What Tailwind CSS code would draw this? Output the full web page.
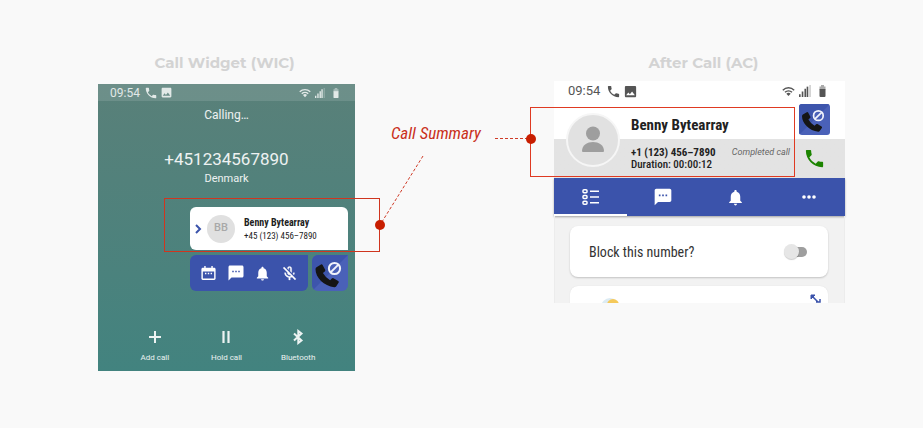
<!DOCTYPE html>
<html lang="en">
<head>
<meta charset="utf-8">
<meta name="viewport" content="width=device-width, initial-scale=1">
<title>Call Summary</title>
<script src="https://cdn.jsdelivr.net/npm/@tailwindcss/browser@4"></script>
</head>
<body class="min-h-screen bg-[#f9f9f9] font-['Roboto',sans-serif]">
<svg class="hidden" aria-hidden="true">
  <symbol id="phone" viewBox="0 0 24 24"><path d="M6.62 10.79c1.44 2.83 3.76 5.14 6.59 6.59l2.2-2.2c.27-.27.67-.36 1.02-.24 1.12.37 2.33.57 3.57.57.55 0 1 .45 1 1V20c0 .55-.45 1-1 1-9.39 0-17-7.61-17-17 0-.55.45-1 1-1h3.5c.55 0 1 .45 1 1 0 1.25.2 2.45.57 3.57.11.35.03.74-.25 1.02l-2.2 2.2z"/></symbol>
  <symbol id="image" viewBox="0 0 24 24"><path d="M21 19V5c0-1.1-.9-2-2-2H5c-1.1 0-2 .9-2 2v14c0 1.1.9 2 2 2h14c1.1 0 2-.9 2-2zM8.500 13.500l2.500 3.010L14.500 12l4.500 6H5l3.500-4.500z"/></symbol>
  <symbol id="wifi" viewBox="0 0 24 20"><path d="M1.500 7.500a15 15 0 0 1 21 0M5.500 11.500a9.500 9.500 0 0 1 13 0" fill="none" stroke="currentColor" stroke-width="2.600"/><path d="M12 18.500l-4-4.500a6 6 0 0 1 8 0z"/></symbol>
  <symbol id="signal" viewBox="0 0 22 22"><path d="M0 17h3v5H0zM5 12h3v10H5zM10 7h3v15h-3z"/><path d="M14 3h3v19h-3z"/><path d="M19 0h2.500v22H19z" opacity=".35"/></symbol>
  <symbol id="battery" viewBox="0 0 14 24"><path d="M4 0h6v3h3v6H1V3h3z" opacity=".5"/><path d="M1 8h12v14q0 2-2 2H3q-2 0-2-2z"/></symbol>
  <symbol id="sms" viewBox="0 0 24 24"><path d="M20 2H4c-1.100 0-1.990.9-1.990 2L2 22l4-4h14c1.100 0 2-.9 2-2V4c0-1.100-.9-2-2-2zM9 11H7V9h2v2zm4 0h-2V9h2v2zm4 0h-2V9h2v2z"/></symbol>
  <symbol id="bell" viewBox="0 0 24 24"><path d="M12 22c1.100 0 2-.9 2-2h-4c0 1.100.89 2 2 2zm6-6v-5c0-3.070-1.640-5.640-4.500-6.320V4c0-.83-.67-1.500-1.500-1.500s-1.500.67-1.500 1.500v.68C7.630 5.360 6 7.920 6 11v5l-2 2v1h16v-1l-2-2z"/></symbol>
  <symbol id="blocked" viewBox="0 0 36 36"><path d="M0 0H36L0 36z" fill="#3d55ac"/><path d="M4.500 12.300L9 9.500q1-.5 1.600.5l2.600 4.700q.4 1-.4 1.700l-1.900 1.500q2.800 4.800 7.200 7.300l1.700-1.700q.8-.7 1.700-.2l4.700 2.700q1 .7.5 1.600l-2.600 3.800q-.6.9-1.800.8C12 31 3.500 22.500 3.500 14.200q0-1.300 1-1.900z" fill="#151515"/><circle cx="22.500" cy="13.500" r="5.600" fill="#4a61b8" stroke="#f1f3fb" stroke-width="2"/><path d="M18.600 17.400l7.800-7.800" stroke="#f1f3fb" stroke-width="2"/></symbol>
</svg>

<main class="grid grid-cols-[257fr_199px_291fr] items-start pt-[52px] pl-[98px] pr-[78px]">
  <section>
    <h2 class="h-[22px] pr-1 text-center font-['Montserrat','Inter',sans-serif] text-[15px] leading-[22px] font-bold text-[#d3d3d3] whitespace-nowrap">Call Widget (WIC)</h2>
    <div class="mt-[10px] flex flex-col bg-linear-to-b from-[#598079] to-[#42837f] text-white/90">
      <div class="flex h-[17px] items-center bg-white/12 pl-3 pr-4 text-xs text-white/80">
        <span>09:54</span>
        <svg class="ml-1 size-[14px] fill-current"><use href="#phone"/></svg>
        <svg class="ml-[2px] size-[13px] fill-current"><use href="#image"/></svg>
        <svg class="ml-auto h-[10px] w-3 fill-current"><use href="#wifi"/></svg>
        <svg class="ml-1 size-[10px] fill-current"><use href="#signal"/></svg>
        <svg class="ml-2 h-[10px] w-[6px] fill-current"><use href="#battery"/></svg>
      </div>
      <p class="mt-[6px] text-center text-xs leading-4">Calling…</p>
      <p class="mt-[26px] text-center text-[17px] leading-5">+451234567890</p>
      <p class="mt-[2px] text-center text-[11px] leading-4">Denmark</p>

      <div class="relative mt-[20px] pl-[92px] pr-[7px]">
        <article class="flex h-[43px] items-center rounded-md rounded-br-none bg-white pl-[5px] text-[#222]">
          <button aria-label="Expand" class="w-2"><svg class="h-[10px] w-[7px]" viewBox="0 0 7 10" fill="none" stroke="#3b53ab" stroke-width="2"><path d="M1 1l4 4-4 4"/></svg></button>
          <div class="ml-1 flex size-7 items-center justify-center rounded-full bg-[#e0e0e0] text-[11px] font-medium text-[#a8a8a8]">BB</div>
          <div class="ml-[9px] whitespace-nowrap">
            <h3 class="font-['Roboto_Condensed','Liberation_Sans_Narrow','Roboto'] text-[10px] leading-[14px] font-bold">Benny Bytearray</h3>
            <p class="font-['Roboto_Condensed','Liberation_Sans_Narrow','Roboto'] text-[9px] leading-3">+45 (123) 456–7890</p>
          </div>
        </article>
        <div class="pointer-events-none absolute -top-[9px] -bottom-[2px] left-[66px] -right-[25px] border border-[#d0351f]"></div>
      </div>

      <div class="mt-[5px] flex gap-1 pl-[92px] pr-[7px]">
        <div class="flex h-9 flex-1 items-center justify-between rounded-md rounded-tr-none bg-[#3b53ab] px-[10px] text-white">
          <button aria-label="Calendar"><svg class="block size-[17px]" viewBox="0 0 24 24" fill="currentColor"><path d="M9 11H7v2h2v-2zm4 0h-2v2h2v-2zm4 0h-2v2h2v-2zm3-7h-2V1.500h-2V4H8V1.500H6V4H4c-1.110 0-2 .9-2 2v13c0 1.100.89 2 2 2h16c1.100 0 2-.9 2-2V6c0-1.100-.9-2-2-2zm0 15H4V9h16v10z"/></svg></button>
          <button aria-label="Message"><svg class="block size-[18px] fill-current"><use href="#sms"/></svg></button>
          <button aria-label="Reminder"><svg class="block size-[17px] fill-current"><use href="#bell"/></svg></button>
          <button aria-label="Mute"><svg class="block size-[17px]" viewBox="0 0 24 24" fill="currentColor" stroke="currentColor" stroke-width=".5"><path d="M10.800 4.900c0-.66.54-1.200 1.200-1.200s1.200.54 1.200 1.200l-.01 3.910L15 10.600V5c0-1.660-1.340-3-3-3-1.540 0-2.790 1.160-2.960 2.650l1.760 1.760V4.900zM19 11h-1.700c0 .58-.1 1.130-.27 1.640l1.270 1.270c.44-.88.7-1.870.7-2.910zM4.410 2.860L3 4.270l6 6V11c0 1.660 1.340 3 3 3 .23 0 .44-.03.65-.08l1.660 1.660c-.71.33-1.500.52-2.310.52-2.760 0-5.300-2.100-5.300-5.100H5c0 3.410 2.720 6.230 6 6.720V21h2v-3.280c.91-.13 1.770-.45 2.550-.9l4.200 4.200 1.410-1.410L4.410 2.860z"/></svg></button>
        </div>
        <button aria-label="Block caller" class="size-9 overflow-hidden rounded-md rounded-tr-none bg-[#4a61b8]"><svg class="block size-full"><use href="#blocked"/></svg></button>
      </div>

      <div class="mt-[38px] grid grid-cols-3 px-[21px] pb-[7px] text-[8px] leading-3">
        <button class="flex flex-col items-center gap-[7px]"><svg class="size-4" viewBox="0 0 16 16" stroke="currentColor" stroke-width="2"><path d="M8 2v12M2 8h12"/></svg>Add call</button>
        <button class="flex flex-col items-center gap-[7px]"><svg class="size-4" viewBox="0 0 16 16" stroke="currentColor" stroke-width="2.200"><path d="M5.500 2v12M10.500 2v12"/></svg>Hold call</button>
        <button class="flex flex-col items-center gap-[7px]"><svg class="size-4" viewBox="0 0 16 16" fill="none" stroke="currentColor" stroke-width="2"><path d="M4 4.500l7.500 7L8.300 14V2l3.200 2.500-7.500 7"/></svg>Bluetooth</button>
      </div>
    </div>
  </section>

  <div class="relative z-10 pt-[71px] pl-9">
    <p class="font-['Roboto_Condensed','Liberation_Sans_Narrow','Roboto'] text-[17px] leading-5 whitespace-nowrap text-[#c9301b] italic">Call Summary</p>
    <svg class="pointer-events-none absolute top-0 left-0 h-[190px] w-[199px]" viewBox="0 0 199 190" stroke="#cf3b27" stroke-dasharray="3 2">
      <path d="M140 86.500H175M68 104L25 173"/>
      <g fill="#c81e00" stroke="none"><circle cx="176" cy="87" r="5"/><circle cx="25" cy="173" r="5"/></g>
    </svg>
  </div>

  <section>
    <h2 class="h-[22px] pl-2 text-center font-['Montserrat','Inter',sans-serif] text-[15px] leading-[22px] font-bold text-[#d3d3d3] whitespace-nowrap">After Call (AC)</h2>
    <div class="mt-[7px] bg-[#f2f2f2] text-[#222]">
      <div class="flex h-5 items-center bg-white pl-[14px] pr-[19px] text-[13px] text-[#555]">
        <span>09:54</span>
        <svg class="ml-[6px] size-[15px] fill-current"><use href="#phone"/></svg>
        <svg class="ml-[2px] size-[15px] fill-current"><use href="#image"/></svg>
        <svg class="ml-auto h-[11px] w-[13px] fill-current"><use href="#wifi"/></svg>
        <svg class="ml-1 size-3 fill-current"><use href="#signal"/></svg>
        <svg class="ml-2 h-3 w-[7px] fill-current"><use href="#battery"/></svg>
      </div>
      <header class="relative flex h-[77px] bg-linear-to-b from-white from-[38px] to-[#e3e3e3] to-[38px]">
        <div class="mt-3 ml-3 size-[54px] shrink-0 rounded-full border-2 border-[#f6f6f6] bg-[#e1e1e1]">
          <svg class="size-full" viewBox="0 0 50 50" fill="#9e9e9e"><circle cx="25" cy="18.500" r="7"/><path d="M14 36c0-12 22-12 22 0q0 1-1 1H15q-1 0-1-1z"/></svg>
        </div>
        <div class="ml-[11px] flex-1 whitespace-nowrap">
          <h3 class="mt-[14px] font-['Roboto_Condensed','Liberation_Sans_Narrow','Roboto'] text-[15px] leading-5 font-bold">Benny Bytearray</h3>
          <div class="mt-[11px] flex justify-between text-[11px] leading-[13px]">
            <strong class="font-['Roboto_Condensed','Liberation_Sans_Narrow','Roboto'] font-bold">+1 (123) 456–7890</strong>
            <em class="text-[9px] text-[#666]">Completed call</em>
          </div>
          <p class="font-['Roboto_Condensed','Liberation_Sans_Narrow','Roboto'] text-[11px] leading-3 font-medium">Duration: 00:00:12</p>
        </div>
        <div class="flex w-[55px] flex-col items-center pt-[3px] pr-[6px]">
          <button aria-label="Block caller" class="size-[31px] overflow-hidden rounded-[3px] bg-[#4a61b8]"><svg class="block size-full"><use href="#blocked"/></svg></button>
          <button aria-label="Call back" class="mt-3"><svg class="block size-[23px] fill-[#1c8400]"><use href="#phone"/></svg></button>
        </div>
        <div class="pointer-events-none absolute top-[6px] bottom-[1px] -left-6 right-[50px] border border-[#df3a22]"></div>
      </header>
      <nav class="grid h-[38px] grid-cols-4 bg-[#3b53ab] text-white shadow-[0_1px_2px_#0005]">
        <button aria-label="Summary" class="flex items-center justify-center border-b-2 border-white pt-[2px]"><svg class="h-4 w-[17px]" viewBox="0 0 17 16" fill="none" stroke="currentColor" stroke-width="1.500"><rect x="1" y=".8" width="4" height="3" rx="1"/><rect x="1" y="6.500" width="4" height="3" rx="1"/><rect x="1" y="12.200" width="4" height="3" rx="1"/><path d="M8 2.300h9M8 8h9M8 13.700h9"/></svg></button>
        <button aria-label="Message" class="flex items-center justify-center"><svg class="size-5 fill-current"><use href="#sms"/></svg></button>
        <button aria-label="Reminder" class="flex items-center justify-center"><svg class="size-[19px] fill-current"><use href="#bell"/></svg></button>
        <button aria-label="More" class="flex items-center justify-center"><svg class="h-4 w-[14px]" viewBox="0 0 14 16" fill="currentColor"><circle cx="2" cy="8" r="1.800"/><circle cx="7" cy="8" r="1.800"/><circle cx="12" cy="8" r="1.800"/></svg></button>
      </nav>
      <div class="overflow-hidden border-x border-[#ececec] pt-[10px] pr-4 pl-[15px]">
        <label class="flex h-[51px] items-center justify-between rounded-lg bg-white pl-[19px] pr-[21px] font-['Roboto_Condensed','Liberation_Sans_Narrow','Roboto'] text-sm text-[#333] shadow-[0_1px_2px_#0003]">
          Block this number?
          <span class="relative flex h-4 w-[23px] items-center">
            <input type="checkbox" role="switch" class="ml-auto h-[10px] w-[18px] appearance-none rounded-full bg-[#9e9e9e]">
            <span class="absolute left-0 size-[15px] rounded-full bg-[#e6e6e6] shadow-[0_1px_1px_#0003]"></span>
          </span>
        </label>
        <div class="mt-[9px] flex h-[17px] justify-between overflow-hidden rounded-t-lg bg-white pt-2 pr-[7px] pl-[31px] shadow-[0_0_1px_#0002]">
          <svg class="h-[9px] w-5" viewBox="0 0 20 9"><circle cx="9" cy="13" r="9" fill="#dcebf3"/><circle cx="12" cy="11" r="6" fill="#f5c95a"/></svg>
          <svg class="h-[9px] w-[11px]" viewBox="0 0 11 9" stroke="#3b53ab" stroke-width="1.500"><path d="M1 1h4L1 5z" fill="#3b53ab" stroke-width="1"/><path d="M2 2l6 6M10 5v3H6" fill="none"/></svg>
        </div>
      </div>
    </div>
  </section>
</main>
</body>
</html>
